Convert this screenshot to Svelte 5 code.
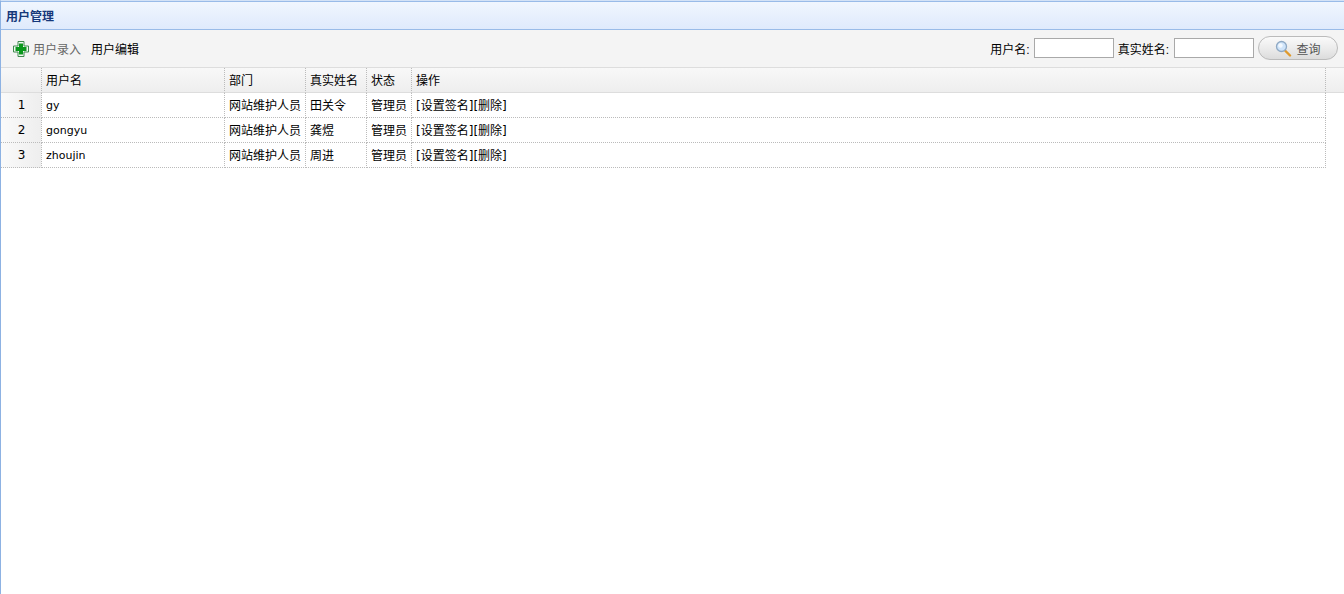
<script lang="ts">
	const users = [
		{ name: 'gy', dept: '网站维护人员', realName: '田关令', status: '管理员' },
		{ name: 'gongyu', dept: '网站维护人员', realName: '龚煜', status: '管理员' },
		{ name: 'zhoujin', dept: '网站维护人员', realName: '周进', status: '管理员' }
	];
</script>

<div class="page">
	<div class="panel-title">用户管理</div>

	<div class="toolbar">
		<div class="tools">
			<svg class="add-icon" width="16" height="16" viewBox="0 0 16 16">
				<path d="M5 .5h6v4.500h4.500v6h-4.500v4.500h-6v-4.500h-4.500v-6h4.500z" fill="#f2f8f2" stroke="#3f8a4e" stroke-linejoin="round" />
				<path d="M6 2.500h4v3.500h3.500v4h-3.500v3.500h-4v-3.500h-3.500v-4h3.500z" fill="#0a981c" />
			</svg>
			<a class="tool muted" href="#add">用户录入</a>
			<a class="tool" href="#edit">用户编辑</a>
		</div>
		<form class="search" onsubmit={(e) => e.preventDefault()}>
			<label for="q-user">用户名:</label>
			<input id="q-user" type="text" />
			<label class="wide" for="q-real">真实姓名:</label>
			<input id="q-real" type="text" />
			<button type="submit">
				<svg width="17" height="17" viewBox="0 0 17 17">
					<path d="M10 10.500l5 5" stroke="#e09a2c" stroke-width="2.400" stroke-linecap="round" />
					<circle cx="6.500" cy="6.500" r="5" fill="#cfe4fa" stroke="#8fa9c4" stroke-width="1.300" />
					<circle cx="5.500" cy="5.500" r="2.200" fill="#f2f8fe" />
				</svg>
				<span>查询</span>
			</button>
		</form>
	</div>

	<div class="grid-wrap">
		<table>
			<colgroup>
				<col style="width:41px" />
				<col style="width:183px" />
				<col style="width:81px" />
				<col style="width:61px" />
				<col style="width:45px" />
				<col style="width:914px" />
			</colgroup>
			<thead>
				<tr>
					<th></th>
					<th>用户名</th>
					<th>部门</th>
					<th>真实姓名</th>
					<th>状态</th>
					<th>操作</th>
				</tr>
			</thead>
			<tbody>
				{#each users as user, i}
					<tr>
						<td class="num">{i + 1}</td>
						<td class="latin">{user.name}</td>
						<td>{user.dept}</td>
						<td>{user.realName}</td>
						<td>{user.status}</td>
						<td class="ops"><a href="#sign">[设置签名]</a><a href="#del">[删除]</a></td>
					</tr>
				{/each}
			</tbody>
		</table>
	</div>
</div>

<style>
	:global(body) {
		background: #fff;
	}

	.page {
		box-sizing: border-box;
		height: 594px;
		overflow: hidden;
		border-left: 1px solid #8db2e3;
		border-top: 1px solid #d3e2f6;
		font-family: 'Liberation Sans', 'Noto Sans CJK SC', sans-serif;
		font-size: 12px;
		color: #000;
	}

	.panel-title {
		box-sizing: border-box;
		height: 29px;
		padding: 2px 5px 0;
		line-height: 27px;
		font-weight: bold;
		color: #15387a;
		background: linear-gradient(#f0f6fe, #dfeafc);
		border-top: 1px solid #99bbe8;
		border-bottom: 1px solid #99bbe8;
	}

	.toolbar {
		box-sizing: border-box;
		height: 37px;
		padding: 0 6px 1px 12px;
		display: flex;
		justify-content: space-between;
		align-items: center;
		background: #f4f4f4;
	}

	.tools,
	.search {
		display: flex;
		align-items: center;
	}

	.tool {
		margin-left: 4px;
		color: #000;
		text-decoration: none;
	}

	.tool.muted {
		color: #666;
		margin-right: 6px;
	}

	.add-icon {
		flex: none;
		margin-top: 2px;
	}

	.search label {
		margin: 0 4px;
	}

	.search label.wide {
		margin-right: 5px;
	}

	.search input {
		box-sizing: border-box;
		width: 80px;
		height: 20px;
		padding: 0 2px;
		border: 1px solid #a9a9a9;
		background: #fff;
	}

	.search button {
		box-sizing: border-box;
		width: 80px;
		height: 24px;
		margin-left: 4px;
		padding: 0;
		display: flex;
		align-items: center;
		justify-content: center;
		gap: 4px;
		font: inherit;
		color: #555;
		border: 1px solid #bbb;
		border-radius: 12px;
		background: linear-gradient(#fafafa, #ececec 50%, #dcdcdc);
	}

	.grid-wrap {
		border-top: 1px solid #ddd;
		background: linear-gradient(#f8f8f8 0, #eeeeee 24px, #ddd 24px, #ddd 25px, transparent 25px);
	}

	table {
		table-layout: fixed;
		width: 1325px;
		border-collapse: separate;
		border-spacing: 0;
	}

	th,
	td {
		box-sizing: border-box;
		height: 25px;
		padding: 0 4px 2px;
		font-weight: normal;
		text-align: left;
		white-space: nowrap;
		overflow: hidden;
		border-right: 1px dotted #bbb;
	}

	th {
		border-bottom: 1px solid #ddd;
	}

	td {
		border-bottom: 1px dotted #bbb;
	}

	td.latin {
		padding-bottom: 0;
		font-family: 'DejaVu Sans', sans-serif;
		font-size: 11px;
	}

	td.num {
		padding: 0 4px 0 5px;
		text-align: center;
		font-family: 'DejaVu Sans', sans-serif;
		background: linear-gradient(90deg, #fafafa, #eee);
	}

	td.ops {
		font-family: 'DejaVu Sans', 'Noto Sans CJK SC', sans-serif;
	}

	td a {
		color: #000;
		text-decoration: none;
	}
</style>
